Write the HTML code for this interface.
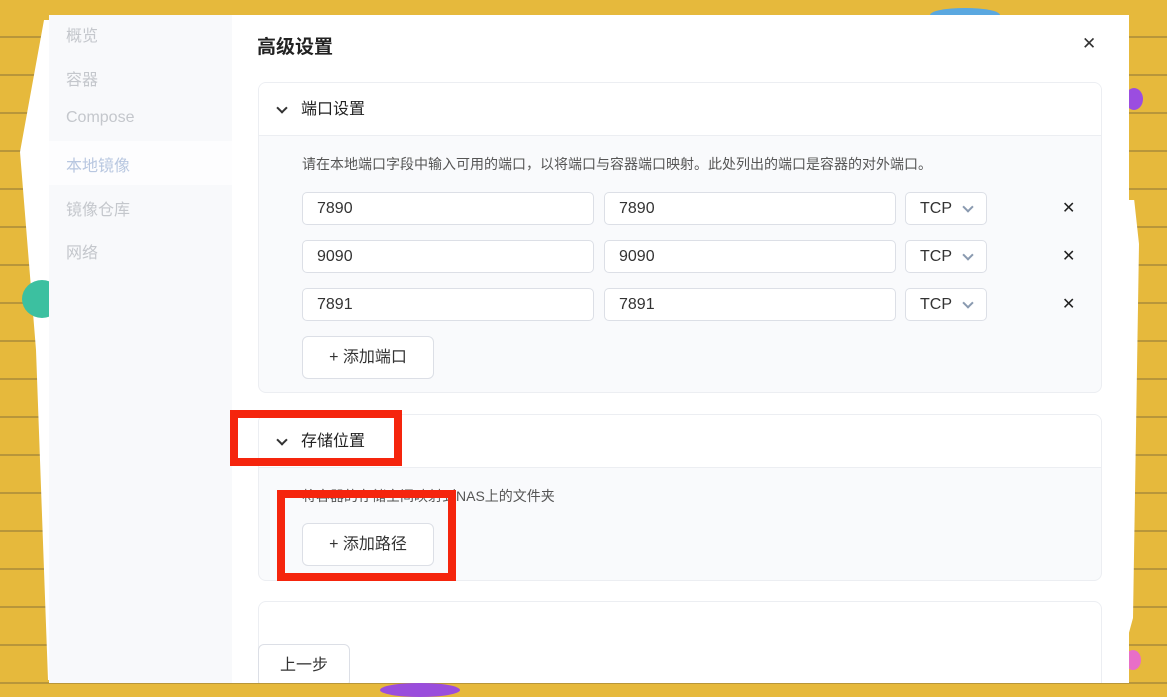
<!DOCTYPE html>
<html><head><meta charset="utf-8"><style>
*{box-sizing:border-box;margin:0;padding:0}
body{width:1167px;height:690px;overflow:hidden;position:relative;background:#e6b93c;font-family:"Liberation Sans","Noto Sans CJK SC",sans-serif;color:#333}
.lines{position:absolute;inset:0;background:repeating-linear-gradient(180deg,transparent 0 36px,#b8963a 36px 38px)}
.paper{position:absolute;background:#fff}
.side{position:absolute;left:49px;top:15px;width:184px;height:668px;background:#f8f9fb}
.side div{position:absolute;left:17px;font-size:16px;color:#c4c7cc}
.modal{position:absolute;left:232px;top:15px;width:897px;height:668px;background:#fff;overflow:hidden}
.title{position:absolute;left:25px;top:17px;font-size:19px;font-weight:bold;color:#222}
.close{position:absolute;left:850px;top:19px;font-size:17px;color:#333}
.card{position:absolute;left:26px;width:844px;border:1px solid #eceef2;border-radius:8px;overflow:hidden;background:#f9fafc}
.hd{height:53px;background:#fff;border-bottom:1px solid #eceef2;font-size:16px;line-height:53px;padding-left:42px;position:relative;color:#222}
.hd:before{content:"";position:absolute;left:19px;top:21px;width:6px;height:6px;border-right:2px solid #333;border-bottom:2px solid #333;transform:rotate(45deg)}
.inp{position:absolute;height:33px;border:1px solid #dcdfe6;border-radius:5px;background:#fff;font-size:16px;line-height:31px;padding-left:14px;color:#333}
.x{position:absolute;font-size:16px;color:#222}
.btn{position:absolute;border:1px solid #dcdfe6;border-radius:6px;background:#fff;font-size:16px;text-align:center;color:#333}
.red{position:absolute;border:8px solid #f5250d}
.ch{position:absolute;right:14px;top:10px;width:8px;height:8px;border-right:2px solid #8a9ab0;border-bottom:2px solid #8a9ab0;transform:rotate(45deg)}
</style></head><body>
<div class="lines"></div>
<div class="paper" style="left:20px;top:20px;width:40px;height:660px;clip-path:polygon(60% 0,100% 0,100% 100%,70% 100%,40% 50%,0 20%)"></div>
<div class="paper" style="left:1127px;top:200px;width:12px;height:440px;clip-path:polygon(0 0,60% 0,100% 10%,50% 95%,0 100%)"></div>
<div style="position:absolute;left:22px;top:280px;width:40px;height:38px;border-radius:50%;background:#3cc0a0"></div>
<div style="position:absolute;left:1125px;top:88px;width:18px;height:22px;border-radius:50%;background:#9b4de0"></div>
<div style="position:absolute;left:1125px;top:650px;width:16px;height:20px;border-radius:50%;background:#e86ec8"></div>
<div style="position:absolute;left:930px;top:8px;width:70px;height:14px;border-radius:50%;background:#5aa8e0"></div>
<div style="position:absolute;left:380px;top:683px;width:80px;height:14px;border-radius:50%;background:#9a4ddc"></div>
<div class="side">
<div style="top:126px;left:0;width:184px;height:44px;background:#fdfdfe"></div>
<div style="top:7px">概览</div><div style="top:51px">容器</div>
<div style="top:94px">Compose</div>
<div style="top:137px;color:#b8c7e0">本地镜像</div>
<div style="top:181px">镜像仓库</div><div style="top:224px">网络</div>
</div>
<div class="modal">
<div class="title">高级设置</div><div class="close">✕</div>
<div class="card" style="top:67px;height:311px">
<div class="hd">端口设置</div>
<div style="position:absolute;left:43px;top:71px;font-size:14px;color:#555">请在本地端口字段中输入可用的端口，以将端口与容器端口映射。此处列出的端口是容器的对外端口。</div>
<div class="inp" style="left:43px;top:109px;width:292px">7890</div><div class="inp" style="left:345px;top:109px;width:292px">7890</div><div class="inp" style="left:646px;top:109px;width:82px">TCP<span class="ch"></span></div><div class="x" style="left:803px;top:115px">✕</div>
<div class="inp" style="left:43px;top:157px;width:292px">9090</div><div class="inp" style="left:345px;top:157px;width:292px">9090</div><div class="inp" style="left:646px;top:157px;width:82px">TCP<span class="ch"></span></div><div class="x" style="left:803px;top:163px">✕</div>
<div class="inp" style="left:43px;top:205px;width:292px">7891</div><div class="inp" style="left:345px;top:205px;width:292px">7891</div><div class="inp" style="left:646px;top:205px;width:82px">TCP<span class="ch"></span></div><div class="x" style="left:803px;top:211px">✕</div>
<div class="btn" style="left:43px;top:253px;width:132px;height:43px;line-height:41px">+ 添加端口</div>
</div>
<div class="card" style="top:399px;height:167px">
<div class="hd">存储位置</div>
<div style="position:absolute;left:43px;top:71px;font-size:14px;color:#555">将容器的存储空间映射到NAS上的文件夹</div>
<div class="btn" style="left:43px;top:108px;width:132px;height:43px;line-height:41px">+ 添加路径</div>
</div>
<div class="card" style="top:586px;height:100px;background:#fff"></div>
<div class="btn" style="left:26px;top:629px;width:92px;height:43px;line-height:41px">上一步</div>
</div>
<div class="red" style="left:230px;top:410px;width:172px;height:56px"></div>
<div class="red" style="left:277px;top:490px;width:179px;height:91px"></div>
</body></html>
